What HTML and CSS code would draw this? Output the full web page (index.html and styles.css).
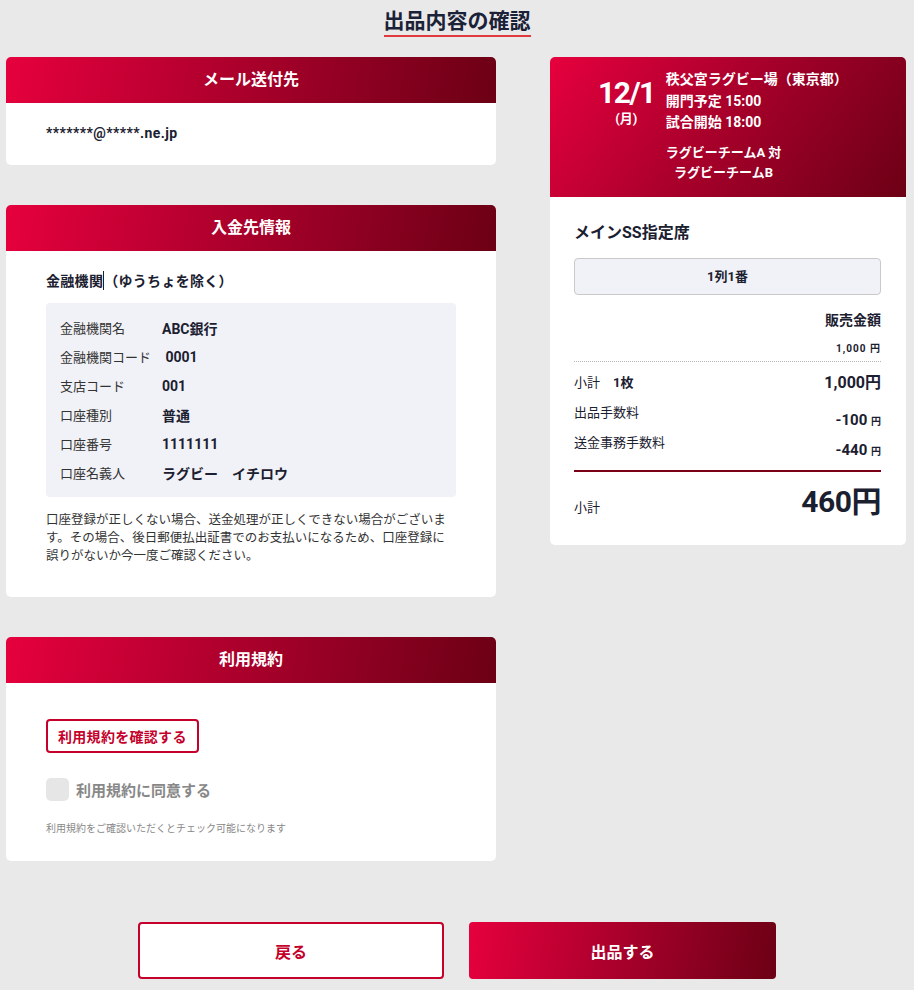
FILE: index.html
```html
<!DOCTYPE html>
<html lang="ja">
<head>
  <meta charset="UTF-8" />
  <meta name="viewport" content="width=device-width, initial-scale=1.0" />
  <title>出品内容の確認</title>
  <link rel="stylesheet" href="styles.css">
</head>
<body>
  <div class="title-wrap">
    <h1 class="page-title">出品内容の確認</h1>
  </div>

  <div class="columns">
    <div class="left-col">
      <section class="card">
        <h2 class="card-head">メール送付先</h2>
        <div class="card-body mail-body">
          <p class="mail">*******@*****.ne.jp</p>
        </div>
      </section>

      <section class="card">
        <h2 class="card-head">入金先情報</h2>
        <div class="card-body bank-body">
          <p class="bank-title">金融機関<span class="caret"></span>（ゆうちょを除く）</p>
          <dl class="bank-box">
            <div class="bank-row"><dt>金融機関名</dt><dd>ABC銀行</dd></div>
            <div class="bank-row"><dt>金融機関コード</dt><dd>&nbsp;0001</dd></div>
            <div class="bank-row"><dt>支店コード</dt><dd>001</dd></div>
            <div class="bank-row"><dt>口座種別</dt><dd>普通</dd></div>
            <div class="bank-row"><dt>口座番号</dt><dd>1111111</dd></div>
            <div class="bank-row"><dt>口座名義人</dt><dd>ラグビー　イチロウ</dd></div>
          </dl>
          <p class="note">口座登録が正しくない場合、送金処理が正しくできない場合がございます。その場合、後日郵便払出証書でのお支払いになるため、口座登録に誤りがないか今一度ご確認ください。</p>
        </div>
      </section>

      <section class="card">
        <h2 class="card-head">利用規約</h2>
        <div class="card-body terms-body">
          <button class="terms-btn">利用規約を確認する</button>
          <label class="agree">
            <span class="check"></span>
            <span>利用規約に同意する</span>
          </label>
          <p class="terms-note">利用規約をご確認いただくとチェック可能になります</p>
        </div>
      </section>
    </div>

    <aside class="card ticket">
      <div class="ticket-head">
        <div class="date">
          <div class="day">12/1</div>
          <div class="week">(月)</div>
        </div>
        <div class="info">
          <p>秩父宮ラグビー場（東京都）</p>
          <p>開門予定 15:00</p>
          <p>試合開始 18:00</p>
          <p class="teams">ラグビーチームA 対<br>ラグビーチームB</p>
        </div>
      </div>
      <div class="ticket-body">
        <p class="seat-name">メインSS指定席</p>
        <div class="seat">1列1番</div>
        <p class="price-label">販売金額</p>
        <p class="price-small">1,000 円</p>
        <div class="fees">
          <div class="fee-row">
            <span class="fee-label">小計　<b>1枚</b></span>
            <span class="fee-total">1,000円</span>
          </div>
          <div class="fee-row">
            <span class="fee-label">出品手数料</span>
            <span class="fee-value">-100 <small>円</small></span>
          </div>
          <div class="fee-row">
            <span class="fee-label">送金事務手数料</span>
            <span class="fee-value">-440 <small>円</small></span>
          </div>
        </div>
        <div class="sum">
          <span class="sum-label">小計</span>
          <span class="sum-value">460円</span>
        </div>
      </div>
    </aside>
  </div>

  <div class="actions">
    <button class="btn btn-back">戻る</button>
    <button class="btn btn-submit">出品する</button>
  </div>
</body>
</html>
```

FILE: styles.css
```css
body {
  margin: 0;
  background: #e9e9e9;
  color: #1b2030;
  font-family: Roboto, "Noto Sans CJK JP", sans-serif;
  font-size: 13px;
}

p {
  margin: 0;
}

.title-wrap {
  text-align: center;
  padding-top: 7px;
  margin-bottom: 20px;
}

.page-title {
  display: inline-block;
  margin: 0;
  font-size: 21px;
  line-height: 28px;
  font-weight: 700;
  color: #1b2238;
  border-bottom: 2px solid #e03a3f;
}

.columns {
  display: grid;
  grid-template-columns: 490px 356px;
  column-gap: 54px;
  align-items: start;
  padding-left: 6px;
}

.left-col {
  display: flex;
  flex-direction: column;
  gap: 40px;
}

.card {
  background: #fff;
  border-radius: 5px;
  overflow: hidden;
}

.card-head,
.btn-submit {
  background: linear-gradient(100deg, #e6003e 0%, #a8002a 50%, #6c0015 100%);
}

.card-head {
  margin: 0;
  height: 46px;
  line-height: 46px;
  text-align: center;
  color: #fff;
  font-size: 16px;
  font-weight: 700;
}

.card-body {
  padding: 0 40px;
}

.mail-body {
  padding-top: 20px;
  padding-bottom: 21px;
}

.mail {
  font-size: 14px;
  line-height: 21px;
  font-weight: 700;
  letter-spacing: 0.4px;
}

.bank-body {
  padding-top: 20px;
  padding-bottom: 32px;
}

.bank-title {
  font-size: 14px;
  line-height: 20px;
  font-weight: 700;
  letter-spacing: 0.3px;
}

.caret {
  display: inline-block;
  width: 1px;
  height: 19px;
  background: #1b2030;
  vertical-align: -4px;
}

.bank-box {
  margin: 12px 0 0;
  width: 410px;
  box-sizing: border-box;
  padding: 10px 14px;
  background: #f1f2f7;
  border-radius: 4px;
}

.bank-row {
  display: flex;
  height: 29px;
  align-items: center;
}

.bank-row dt {
  width: 102px;
  font-size: 13px;
  color: #333;
}

.bank-row dd {
  margin: 0;
  font-size: 14px;
  font-weight: 700;
}

.note {
  margin-top: 14px;
  width: 410px;
  font-size: 12.5px;
  line-height: 18px;
  color: #333;
}

.terms-body {
  padding-top: 36px;
  padding-bottom: 25px;
}

.terms-btn {
  display: block;
  height: 34px;
  padding: 0 10px;
  background: #fff;
  border: 2px solid #c4002b;
  border-radius: 4px;
  color: #c4002b;
  font-family: Roboto, "Noto Sans CJK JP", sans-serif;
  font-size: 14px;
  font-weight: 700;
  letter-spacing: 0.3px;
}

.agree {
  display: flex;
  align-items: center;
  gap: 7px;
  margin-top: 25px;
  color: #888;
  font-size: 15px;
  font-weight: 700;
}

.check {
  width: 23px;
  height: 23px;
  border-radius: 5px;
  background: #e6e6e6;
}

.terms-note {
  margin-top: 21px;
  font-size: 10px;
  line-height: 14px;
  color: #888;
}

.ticket-head {
  display: flex;
  gap: 11px;
  padding: 12px 0 14px 48px;
  color: #fff;
  font-weight: 700;
  background: linear-gradient(125deg, #e6003e 0%, #a5002a 50%, #6c0015 100%);
}

.date {
  margin-top: 7px;
  text-align: center;
}

.day {
  font-size: 30px;
  line-height: 34px;
  letter-spacing: -1.5px;
}

.week {
  font-size: 13px;
  line-height: 18px;
}

.info p {
  font-size: 14px;
  line-height: 21.5px;
}

.info .teams {
  display: inline-block;
  margin-top: 9px;
  text-align: center;
  font-size: 13px;
  line-height: 20px;
}

.ticket-body {
  padding: 24px 25px 23px 24px;
}

.seat-name {
  font-size: 16px;
  line-height: 24px;
  font-weight: 700;
}

.seat {
  margin-top: 13px;
  height: 37px;
  box-sizing: border-box;
  line-height: 35px;
  text-align: center;
  background: #f1f2f7;
  border: 1px solid #c9c9c9;
  border-radius: 4px;
  font-size: 13px;
  font-weight: 700;
}

.price-label {
  margin-top: 15px;
  text-align: right;
  font-size: 14px;
  line-height: 20px;
  font-weight: 700;
}

.price-small {
  margin-top: 12px;
  padding-bottom: 5px;
  text-align: right;
  font-size: 10px;
  line-height: 14px;
  font-weight: 700;
  letter-spacing: 1px;
  border-bottom: 1px dotted #b5b5b5;
}

.fees {
  padding-top: 6px;
  padding-bottom: 12px;
  border-bottom: 2px solid #7a0018;
}

.fee-row {
  display: flex;
  justify-content: space-between;
  align-items: flex-start;
  height: 30px;
}

.fee-label {
  font-size: 13px;
  line-height: 30px;
}

.fee-total {
  font-size: 16px;
  line-height: 30px;
  font-weight: 700;
}

.fee-value {
  margin-top: 14px;
  font-size: 15px;
  line-height: 16px;
  font-weight: 700;
}

.fee-value small {
  font-size: 10px;
}

.sum {
  display: flex;
  justify-content: space-between;
  align-items: baseline;
  margin-top: 10px;
}

.sum-label {
  font-size: 13px;
}

.sum-value {
  font-size: 30px;
  line-height: 40px;
  font-weight: 700;
  letter-spacing: -0.5px;
}

.actions {
  display: flex;
  justify-content: center;
  gap: 25px;
  margin-top: 61px;
}

.btn {
  width: 307px;
  height: 57px;
  border-radius: 4px;
  font-family: Roboto, "Noto Sans CJK JP", sans-serif;
  font-size: 16px;
  font-weight: 700;
}

.btn-back {
  width: 306px;
  background: #fff;
  border: 2px solid #c4002b;
  color: #c4002b;
}

.btn-submit {
  border: 0;
  color: #fff;
}
```
